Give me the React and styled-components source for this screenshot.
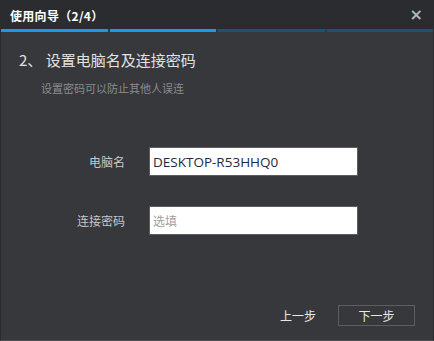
import React from "react"
import styled, { createGlobalStyle } from "styled-components"

const GlobalStyle = createGlobalStyle`
  html, body {
    margin: 0;
    padding: 0;
    background: #36383c;
  }
  body {
    font-family: "Noto Sans CJK SC", "Microsoft YaHei", sans-serif;
  }
`

const steps = [true, true, false, false]

const Wizard = () => (
  <Window>
    <TitleBar>
      <Title>使用向导（2/4）</Title>
      <Close>×</Close>
    </TitleBar>
    <Progress>
      {steps.map((done, i) => (
        <Segment key={i} done={done} />
      ))}
    </Progress>
    <Body>
      <Heading>2、 设置电脑名及连接密码</Heading>
      <Hint>设置密码可以防止其他人误连</Hint>
      <Form>
        <Label>电脑名</Label>
        <Field defaultValue="DESKTOP-R53HHQ0" />
        <Label>连接密码</Label>
        <Field placeholder="选填" />
      </Form>
    </Body>
    <Footer>
      <LinkButton>上一步</LinkButton>
      <NextButton>下一步</NextButton>
    </Footer>
  </Window>
)

export default function App() {
  return (
    <>
      <GlobalStyle />
      <Wizard />
    </>
  )
}

const Window = styled.div`
  width: 434px;
  height: 341px;
  box-sizing: border-box;
  background: #36383c;
  border: 1px solid #2a2c2f;
  border-bottom-color: #4a4c50;
  display: flex;
  flex-direction: column;
`

const TitleBar = styled.div`
  height: 28px;
  background: #2a2c30;
  display: flex;
  align-items: center;
  justify-content: space-between;
  padding: 0 10px 0 9px;
`

const Title = styled.div`
  color: #ffffff;
  font-size: 12px;
  font-weight: bold;
  letter-spacing: 0.3px;
`

const Close = styled.div`
  color: #b8b8b8;
  font-family: "DejaVu Sans", sans-serif;
  font-size: 16px;
  font-weight: bold;
  line-height: 1;
`

const Progress = styled.div`
  display: flex;
  gap: 2px;
  height: 3px;
`

const Segment = styled.div`
  flex: 1;
  background: ${props => (props.done ? "#1a9ae6" : "#22506f")};
`

const Body = styled.div`
  flex: 1;
  padding: 17px 0 0 18px;
`

const Heading = styled.div`
  color: #e2e2e2;
  font-size: 15px;
  line-height: 22px;
`

const Hint = styled.div`
  color: #8a8c90;
  font-size: 11px;
  margin: 9px 0 0 22px;
`

const Form = styled.div`
  display: grid;
  grid-template-columns: 106px 209px;
  column-gap: 24px;
  row-gap: 30px;
  align-items: center;
  margin-top: 51px;
`

const Label = styled.div`
  color: #c8c8c8;
  font-size: 12px;
  text-align: right;
`

const Field = styled.input`
  height: 29px;
  box-sizing: border-box;
  border: 1px solid #5a5c60;
  background: #ffffff;
  padding: 0 3px;
  font-family: "Open Sans", "Noto Sans CJK SC", sans-serif;
  font-size: 13.5px;
  color: #1e2a44;
  outline: none;
  &::placeholder {
    color: #a0a0a0;
    font-size: 12px;
  }
`

const Footer = styled.div`
  display: flex;
  justify-content: flex-end;
  align-items: center;
  gap: 22px;
  padding: 0 18px 14px 0;
`

const LinkButton = styled.button`
  background: none;
  border: none;
  padding: 0;
  color: #e8e8e8;
  font-family: inherit;
  font-size: 12px;
  cursor: pointer;
`

const NextButton = styled.button`
  width: 77px;
  height: 21px;
  box-sizing: border-box;
  background: transparent;
  border: 1px solid #5c5e62;
  color: #e8e8e8;
  font-family: inherit;
  font-size: 12px;
  padding: 0;
  cursor: pointer;
`
